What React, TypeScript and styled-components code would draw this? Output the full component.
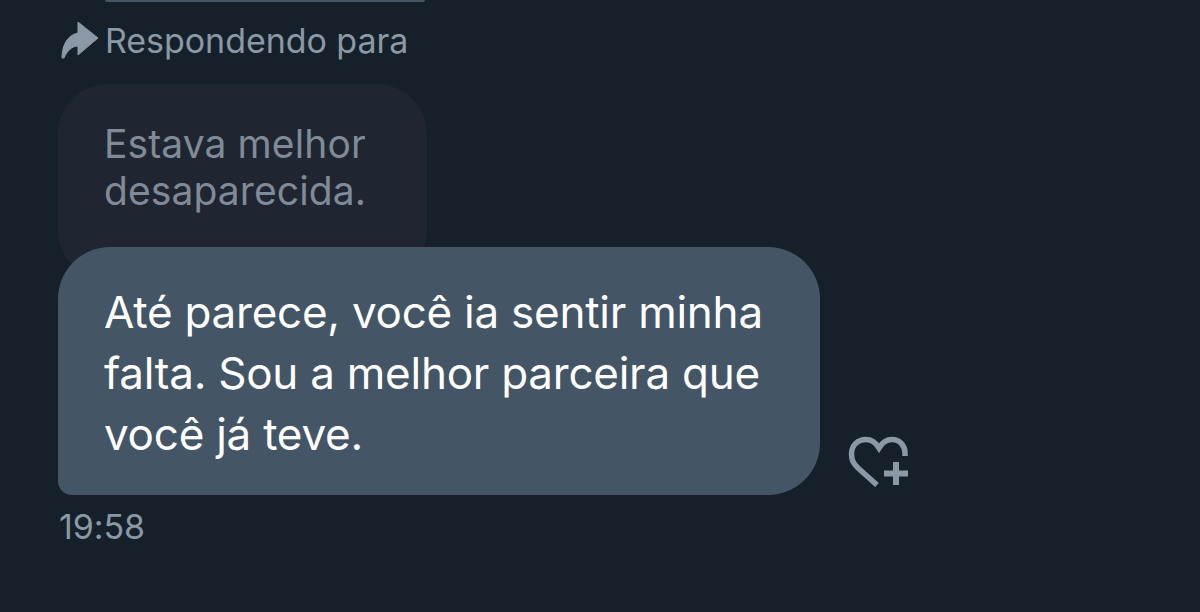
import React from 'react';
import styled, { createGlobalStyle } from 'styled-components';

const GlobalStyle = createGlobalStyle`
  html, body {
    margin: 0;
    padding: 0;
    background: #16202b;
  }
`;

const Screen = styled.div`
  width: 1200px;
  height: 612px;
  overflow: hidden;
  background: #16202b;
  font-family: Inter, "Liberation Sans", sans-serif;
`;

const PreviousBubbleEdge = styled.div`
  width: 320px;
  height: 2px;
  margin-left: 105px;
  background: #465667;
  border-radius: 0 0 24px 24px;
`;

const Thread = styled.div`
  display: flex;
  flex-direction: column;
  align-items: flex-start;
  padding: 0 0 0 58px;
`;

const ReplyLabel = styled.div`
  display: flex;
  align-items: center;
  gap: 7px;
  height: 40px;
  margin: 18px 0 0 3px;
  color: #8b98a5;
  font-size: 34px;
  letter-spacing: -0.05px;
  white-space: nowrap;
`;

const QuotedBubble = styled.div`
  box-sizing: border-box;
  width: 369px;
  height: 196px;
  margin-top: 24px;
  padding: 36px 46px;
  background: #1f2631;
  border-radius: 50px;
  color: #7f8b98;
  font-size: 39px;
  line-height: 47px;
  letter-spacing: 0.1px;
  white-space: nowrap;
`;

const MessageRow = styled.div`
  display: flex;
  align-items: flex-end;
  gap: 28px;
  margin-top: -33px;
`;

const MessageBubble = styled.div`
  box-sizing: border-box;
  width: 762px;
  height: 248px;
  padding: 35px 46px;
  background: #445566;
  border-radius: 52px 52px 52px 14px;
  color: #ffffff;
  font-size: 44px;
  line-height: 61px;
  letter-spacing: -0.25px;
  white-space: nowrap;
`;

const ReactIcon = styled.svg`
  display: block;
  width: 60px;
  height: 54px;
  margin-bottom: 7px;
  flex: none;
`;

const Timestamp = styled.div`
  margin-top: 13px;
  margin-left: 1px;
  color: #8b98a5;
  font-size: 34px;
  line-height: 38px;
  letter-spacing: -0.1px;
`;

export default function App() {
  return (
    <Screen>
      <GlobalStyle />
      <PreviousBubbleEdge />
      <Thread>
        <ReplyLabel>
          <svg width="37" height="37" viewBox="0 0 37 37">
            <path
              d="M1 36 C1 24 6 13 17 11 V0 L37 16 L17 33 V24 C11 24 6 29 3 36 Z"
              fill="#8b98a5"
              stroke="#8b98a5"
              strokeWidth="1"
              strokeLinejoin="round"
            />
          </svg>
          Respondendo para
        </ReplyLabel>
        <QuotedBubble>
          Estava melhor
          <br />
          desaparecida.
        </QuotedBubble>
        <MessageRow>
          <MessageBubble>
            Até parece, você ia sentir minha
            <br />
            falta. Sou a melhor parceira que
            <br />
            você já teve.
          </MessageBubble>
          <ReactIcon viewBox="0 0 60 54" fill="none">
            <path
              d="M29 51 L10 34 C5 29 3.5 26 3.5 20 C3.5 11 10 5.5 18 5.5 C24 5.5 28 9 31 14 C34 9 38 5.5 44 5.5 C52 5.5 57 12 57 19 V22"
              stroke="#8b98a5"
              strokeWidth="5.5"
            />
            <path d="M48 28 V51 M36 39.5 H60" stroke="#8b98a5" strokeWidth="6" />
          </ReactIcon>
        </MessageRow>
        <Timestamp>19:58</Timestamp>
      </Thread>
    </Screen>
  );
}
